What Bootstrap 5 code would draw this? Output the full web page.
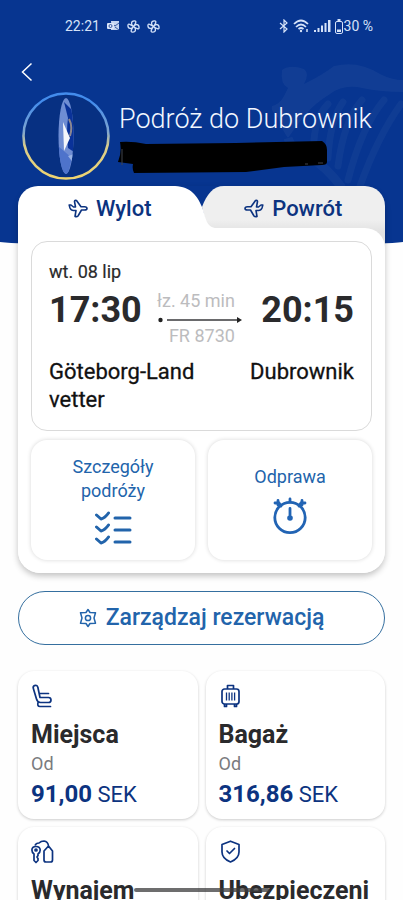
<!DOCTYPE html>
<html lang="pl">
<head>
<meta charset="utf-8">
<meta name="viewport" content="width=device-width, initial-scale=1">
<title>Podróż do Dubrownik</title>
<link href="https://cdn.jsdelivr.net/npm/bootstrap@5.3.0/dist/css/bootstrap.min.css" rel="stylesheet">
<style>
  :root { --navy: #073590; --ink: #2a2a2c; --link: #2264ab; --deep: #0c3380; }
  body { font-family: Roboto, "Liberation Sans", sans-serif; background: #fefefe; color: var(--ink); }
  svg { display: block; flex: none; }
  .screen { height: 100vh; }
  .sky { top: 0; left: 0; width: 100%; height: 245px; z-index: -1; }
  .harp { top: 60px; right: 0; z-index: -1; }
  .status { height: 52px; padding: 0 30px 0 65px; font-size: 14px; line-height: 16px; color: #d5e2f8; }
  .status-icons { gap: 7px; margin-left: 7px; }
  .back { height: 40px; padding: 0 21px; }
  .profile { padding: 0 22px; gap: 9px; height: 94px; }
  .trip-title { font-size: 27px; line-height: 32px; font-weight: 300; color: #f2f7ff; padding-top: 11px; }
  .scribble { margin: 5px 0 0 -3px; }
  .gutter { padding-left: 18px; padding-right: 18px; }
  .trip { border-radius: 22px; box-shadow: 0 3px 6px rgba(0,0,0,.24); }
  .tabs { height: 42px; z-index: 0; }
  .tab-shape { top: 0; left: 0; right: 0; height: 64px; z-index: -1; }
  .shape-l { background: #fff; border-radius: 20px 0 0 0; }
  .shape-r { background: linear-gradient(#efefef 34px, #e2e2e2 46px); border-radius: 0 20px 0 0; }
  .tab-btn { font-size: 22px; line-height: 28px; font-weight: 500; color: var(--deep); gap: 8px; }
  .trip-body { background: #fff; border-radius: 0 20px 22px 22px; padding: 13px; z-index: 1; }
  .flight { border: 1px solid #dadada; border-radius: 16px; padding: 18px 17px 16px; margin-bottom: 9px; }
  .day { font-size: 18px; line-height: 24px; -webkit-text-stroke: .2px var(--ink); }
  .hour { font-size: 36px; line-height: 42px; font-weight: 700; padding-top: 5px; }
  .legs { font-size: 18px; line-height: 22px; color: #bcbcbe; padding: 6px 4px 0 0; }
  .leg-text { padding-right: 7px; }
  .city { font-size: 22px; line-height: 28px; color: #111; padding-top: 2px; -webkit-text-stroke: .3px #111; }
  .cities { padding-top: 9px; }
  .tile { background: #fff; border: 0; border-radius: 16px; height: 120px; box-shadow: 0 0 4px rgba(0,0,0,.16); color: var(--link); font-size: 18px; line-height: 24px; gap: 8px; }
  .tiles { gap: 13px; }
  .manage { height: 54px; margin-top: 18px; border: 1px solid #356f9f; border-radius: 27px; color: var(--link); font-size: 23px; line-height: 28px; font-weight: 500; gap: 9px; background: #fff; }
  .extras { margin-top: 26px; display: grid; grid-template-columns: 1fr 1fr; gap: 8px; }
  .extra { background: #fff; border-radius: 16px; height: 148px; padding: 13px; box-shadow: 0 1px 3px rgba(0,0,0,.2); color: var(--ink); }
  .extra-name { font-size: 25px; line-height: 30px; font-weight: 700; margin-top: 12px; }
  .extra-from { font-size: 18px; line-height: 28px; color: #7a7b7e; }
  .extra-price { font-size: 22px; line-height: 32px; color: var(--deep); }
  .extra-price b { font-size: 24px; font-weight: 700; }
  .handle { bottom: 8px; left: 0; right: 0; margin: auto; width: 136px; height: 4px; border-radius: 2px; background: rgba(60,60,62,.75); z-index: 3; }
</style>
</head>
<body>
<main class="screen position-relative overflow-hidden">
  <div class="position-relative z-0">
    <svg class="sky position-absolute" viewBox="0 0 403 245" preserveAspectRatio="none" aria-hidden="true"><path d="M0 0H403V242Q385 244 340 245H60Q20 244 0 242Z" fill="#073590"/></svg>
    <svg class="harp position-absolute" width="135" height="130" viewBox="0 0 135 130" aria-hidden="true" fill="none" stroke="#fff" stroke-opacity=".035">
      <path d="M14 10Q22 4 36 9Q42 14 36 24Q56 14 66 6Q90 0 112 14Q124 20 135 20V32Q112 32 94 28Q76 24 62 34Q46 44 38 54Q28 66 20 78Q14 70 10 58Q2 50 4 46Q12 44 16 36L20 28Q12 24 14 10Z" fill="#fff" fill-opacity=".045" stroke="none"/>
      <path d="M60 44Q48 56 46 80M75 42Q62 60 60 98M94 40Q76 60 70 106M116 40Q94 66 80 120M133 44Q110 76 92 126" stroke-width="7" stroke-linecap="round"/>
      <path d="M20 78Q24 92 42 98Q58 106 74 128" stroke-width="9"/>
    </svg>

    <div class="status d-flex align-items-center">
      <span>22:21</span>
      <div class="status-icons d-flex align-items-center">
        <svg width="13" height="12" viewBox="0 0 13 12" aria-hidden="true"><path d="M4 1H12V10H4Z" fill="#c5d5f1"/><path d="M4 3L8 6L12 3M8 7L12 10" stroke="#38599f" fill="none"/><rect y="3" width="7" height="6" rx="1" fill="#dce7fa"/><circle cx="3.500" cy="6" r="1.500" fill="none" stroke="#38599f"/></svg>
        <svg width="13" height="13" viewBox="0 0 14 14" fill="none" stroke="#d5e2f8" stroke-width="1.400" aria-hidden="true"><path id="fan" d="M7 7C4 5 4 1 8 1C11 1 9 4 7 7C9 4 13 4 13 8C13 11 10 9 7 7C10 9 10 13 6 13C3 13 5 10 7 7C5 10 1 10 1 6C1 3 4 5 7 7Z"/></svg>
        <svg width="13" height="13" viewBox="0 0 14 14" fill="none" stroke="#d5e2f8" stroke-width="1.400" aria-hidden="true"><use href="#fan"/></svg>
      </div>
      <svg class="ms-auto" width="10" height="14" viewBox="0 0 10 14" fill="none" stroke="#d5e2f8" stroke-width="1.200" aria-hidden="true"><path d="M1 4L8 10L5 13V1L8 4L1 10"/></svg>
      <svg class="ms-1" width="17" height="14" viewBox="0 0 17 14" fill="none" stroke="#d5e2f8" stroke-width="1.700" aria-hidden="true"><path d="M1 5Q8 -2 15 5M3 8Q8 3 13 8M5.500 10Q8 8 10.500 10"/><circle cx="8" cy="12" r="1.200" fill="#d5e2f8" stroke="none"/><path d="M14 10V13" stroke-width="1.500"/></svg>
      <svg class="ms-1" width="17" height="13" viewBox="0 0 17 13" fill="#d5e2f8" aria-hidden="true"><path d="M0 10h2v2H0zM3.500 8h2v4h-2zM7 5.500h2V12H7zM10.500 3h2v9h-2zM14 0h2.500v12H14z"/></svg>
      <svg class="ms-1" width="9" height="15" viewBox="0 0 9 15" fill="none" stroke="#d5e2f8" aria-hidden="true"><rect x=".5" y="2.500" width="7" height="12" rx="1.500"/><path d="M2.500 1H5.500" stroke-width="2"/><path d="M2 10.500H6V13H2Z" fill="#d5e2f8" stroke="none"/></svg>
      <span>30 %</span>
    </div>

    <div class="back d-flex align-items-center">
      <button class="btn p-0 border-0" type="button" aria-label="Wstecz"><svg width="12" height="20" viewBox="0 0 12 20" fill="none" stroke="#fff" stroke-width="1.500"><path d="M10.500 1.500L1.500 10L10.500 18.500"/></svg></button>
    </div>

    <div class="profile d-flex">
      <svg width="88" height="88" viewBox="0 0 88 88" role="img" aria-label="Zdjęcie profilowe">
        <defs><linearGradient id="ring" x2="0" y2="1"><stop offset=".1" stop-color="#438cec"/><stop offset=".45" stop-color="#7fa5cf"/><stop offset=".62" stop-color="#d9cd8c"/><stop offset="1" stop-color="#efd470"/></linearGradient>
        <clipPath id="face"><ellipse cx="44" cy="44" rx="7.500" ry="38"/></clipPath></defs>
        <circle cx="44" cy="44" r="42.500" fill="#073082" stroke="url(#ring)" stroke-width="2.600"/>
        <g clip-path="url(#face)"><rect x="36" y="6" width="16" height="76" fill="#6f8dd3"/><path d="M42 10L52 20V60L46 56Q44 40 46 26Z" fill="#0a3299"/><path d="M41 30L48 46L42 59Z" fill="#f4f6fa"/><path d="M47 27Q51 34 48 44" fill="none" stroke="#8c8790" stroke-width="2"/><path d="M36 54L50 66L46 82H36Z" fill="#4e73cb"/><path d="M46 64L52 62V72Z" fill="#98b2e4"/></g>
      </svg>
      <div>
        <h1 class="trip-title m-0 text-nowrap">Podróż do Dubrownik</h1>
        <svg class="scribble" width="214" height="36" viewBox="0 0 214 36" aria-hidden="true"><path d="M4 2Q16 1 30 4L120 3L206 1Q211 4 211 10V22Q211 25 206 25L168 27L130 32L18 33Q16 29 17 24L2 22Q6 12 4 2Z" fill="#000"/><path d="M6 9V25M189 24H192M202 23H207" stroke="#41454c" fill="none"/></svg>
      </div>
    </div>

    <div class="gutter">
      <section class="trip">
        <div class="tabs d-flex position-relative" role="tablist">
          <div class="tab-shape position-absolute d-flex" aria-hidden="true">
            <div class="shape-l flex-fill"></div>
            <svg width="70" height="64" viewBox="0 0 70 64"><defs><linearGradient id="dusk" gradientUnits="userSpaceOnUse" x1="0" y1="34" x2="0" y2="46"><stop stop-color="#efefef"/><stop offset="1" stop-color="#e2e2e2"/></linearGradient></defs><path d="M70 0H57C46 0 40 8 35 21L45 64H70Z" fill="url(#dusk)"/><path d="M0 0H5C22 0 29 7 35 21C39 32 39 42 50 42V64H0Z" fill="#fff"/></svg>
            <div class="shape-r flex-fill"></div>
          </div>
          <button class="tab-btn btn p-0 pt-1 border-0 w-50 d-flex align-items-center justify-content-center" type="button" role="tab" aria-selected="true">
            <svg width="20" height="20" viewBox="0 0 20 20" fill="none" stroke="#0c3380" stroke-width="1.600" stroke-linejoin="round"><path id="plane" d="M1.200 6H3L5.500 8H7.500L6.500 2.500Q6.500 1 8.500 1.500L13 7.700H16.500Q19 8 19 9.500Q19 11 16.500 11H13.500L10 17Q9 18 7 17.500L8 11.500H5.500Q3 11.500 2 9Z"/></svg>Wylot</button>
          <button class="tab-btn btn p-0 pt-1 border-0 w-50 d-flex align-items-center justify-content-center" type="button" role="tab" aria-selected="false">
            <svg width="20" height="20" viewBox="0 0 20 20" fill="none" stroke="#0c3380" stroke-width="1.600" stroke-linejoin="round"><use href="#plane" transform="matrix(-1 0 0 1 20 0)"/></svg>Powrót</button>
        </div>
        <div class="trip-body position-relative">
          <div class="flight">
            <div class="day">wt. 08 lip</div>
            <div class="d-flex justify-content-between">
              <div class="hour">17:30</div>
              <div class="legs d-flex flex-column align-items-end">
                <div class="leg-text">łz. 45 min</div>
                <svg width="84" height="13" viewBox="0 0 84 13" aria-hidden="true"><circle cx="2.500" cy="8" r="2.200" fill="#222"/><path d="M9 8H80" stroke="#39393b" stroke-width="1.500"/><path d="M79 5L84 8L79 11Z" fill="#222"/></svg>
                <div class="leg-text">FR 8730</div>
              </div>
              <div class="hour">20:15</div>
            </div>
            <div class="cities d-flex justify-content-between">
              <div class="city">Göteborg-Land<br>vetter</div>
              <div class="city">Dubrownik</div>
            </div>
          </div>
          <div class="tiles d-flex">
            <button class="tile w-50 d-flex flex-column align-items-center justify-content-center" type="button">Szczegóły<br>podróży
              <svg width="38" height="34" viewBox="0 0 38 34" fill="none" stroke="#2264ab" stroke-width="3" stroke-linecap="round" stroke-linejoin="round"><path d="M2.500 4L7 8Q11 7 14.500 2M2.500 16L7 20Q11 19 14.500 14M2.500 28L7 32Q11 31 14.500 26M21 7H36M21 19H36M21 31H36"/></svg></button>
            <button class="tile w-50 d-flex flex-column align-items-center justify-content-center" type="button">Odprawa
              <svg width="36" height="38" viewBox="0 0 36 38" fill="none" stroke="#2264b4" stroke-width="2.800" stroke-linecap="round"><circle cx="18" cy="20.500" r="15.200"/><path d="M18 2V5M6 3.500V8M3 6H7L9 9M30 3.500V8M33 6H29L27 9M18 11.500V18"/><circle cx="18" cy="21" r="2.800" fill="#2264b4" stroke="none"/></svg></button>
          </div>
        </div>
      </section>

      <button class="manage btn w-100 p-0 d-flex align-items-center justify-content-center" type="button">
        <svg width="18" height="20" viewBox="0 0 18 20" fill="none" stroke="#2264ab" stroke-width="1.500" stroke-linejoin="round"><path d="M9 1.500L11 4.500L16.500 4.800L15 10L16.500 15.200L11 15.500L9 18.500L7 15.500L1.500 15.200L3 10L1.500 4.800L7 4.500Z"/><circle cx="9" cy="10" r="2.600"/></svg>Zarządzaj rezerwacją</button>

      <div class="extras">
        <a class="extra text-decoration-none" href="#miejsca">
          <svg width="24" height="24" viewBox="0 0 24 24" fill="none" stroke="#0c3380" stroke-width="1.700" stroke-linejoin="round" stroke-linecap="round"><path d="M3.500 1.500Q6.500 .5 7 4L9 13.500H17.500Q20 13.500 20 16Q20 18.500 17.500 18.500H9.500Q6.500 18.500 5.500 15L2.500 5Q1.500 2.500 3.500 1.500ZM8.500 9.500H17.500M7 18.500Q6 22.500 9 22.500H19.500"/></svg>
          <div class="extra-name">Miejsca</div>
          <div class="extra-from">Od</div>
          <div class="extra-price text-nowrap"><b>91,00</b> SEK</div>
        </a>
        <a class="extra text-decoration-none" href="#bagaz">
          <svg width="24" height="24" viewBox="0 0 24 24" fill="none" stroke="#0c3380" stroke-width="1.700" stroke-linejoin="round"><rect x="3" y="5" width="17" height="15" rx="2.500"/><path d="M8.500 5V1.500H14.500V5M5.500 20V22.500H7.500V20M15.500 20V22.500H17.500V20"/><path d="M7.500 8.500V16.500M10.200 8.500V16.500M12.900 8.500V16.500M15.600 8.500V16.500" stroke-width="1.300"/></svg>
          <div class="extra-name">Bagaż</div>
          <div class="extra-from">Od</div>
          <div class="extra-price text-nowrap"><b>316,86</b> SEK</div>
        </a>
        <a class="extra text-decoration-none" href="#wynajem">
          <svg width="24" height="24" viewBox="0 0 24 24" fill="none" stroke="#0c3380" stroke-width="1.700" stroke-linejoin="round"><path d="M3 14Q.9 12.500 .9 10Q1 6.500 5 6.500Q9 6.500 9.200 10Q9.200 12.500 7 14V15.500L6 17L7 18.500V20.500L5 22.500L3 20.500Z"/><circle cx="5" cy="10" r="1"/><path d="M4 5.500Q5 3 8 3Q10 1 13 1Q17 1.500 17.500 6L21.500 11V20Q21.500 22 19.500 22H15Q13 22 13 20V11L17.500 6"/></svg>
          <div class="extra-name">Wynajem</div>
        </a>
        <a class="extra text-decoration-none" href="#ubezpieczenie">
          <svg width="24" height="24" viewBox="0 0 24 24" fill="none" stroke="#0c3380" stroke-width="1.700" stroke-linejoin="round" stroke-linecap="round"><path d="M11.500 1.200L20 4.500V12Q20 18.500 11.500 22Q3 18.500 3 12V4.500ZM8 11L10.500 13.500L15.500 8.500"/></svg>
          <div class="extra-name text-nowrap">Ubezpieczeni</div>
        </a>
      </div>
    </div>
  </div>
  <div class="handle position-absolute" aria-hidden="true"></div>
</main>
<script src="https://cdn.jsdelivr.net/npm/bootstrap@5.3.0/dist/js/bootstrap.bundle.min.js"></script>
</body>
</html>
